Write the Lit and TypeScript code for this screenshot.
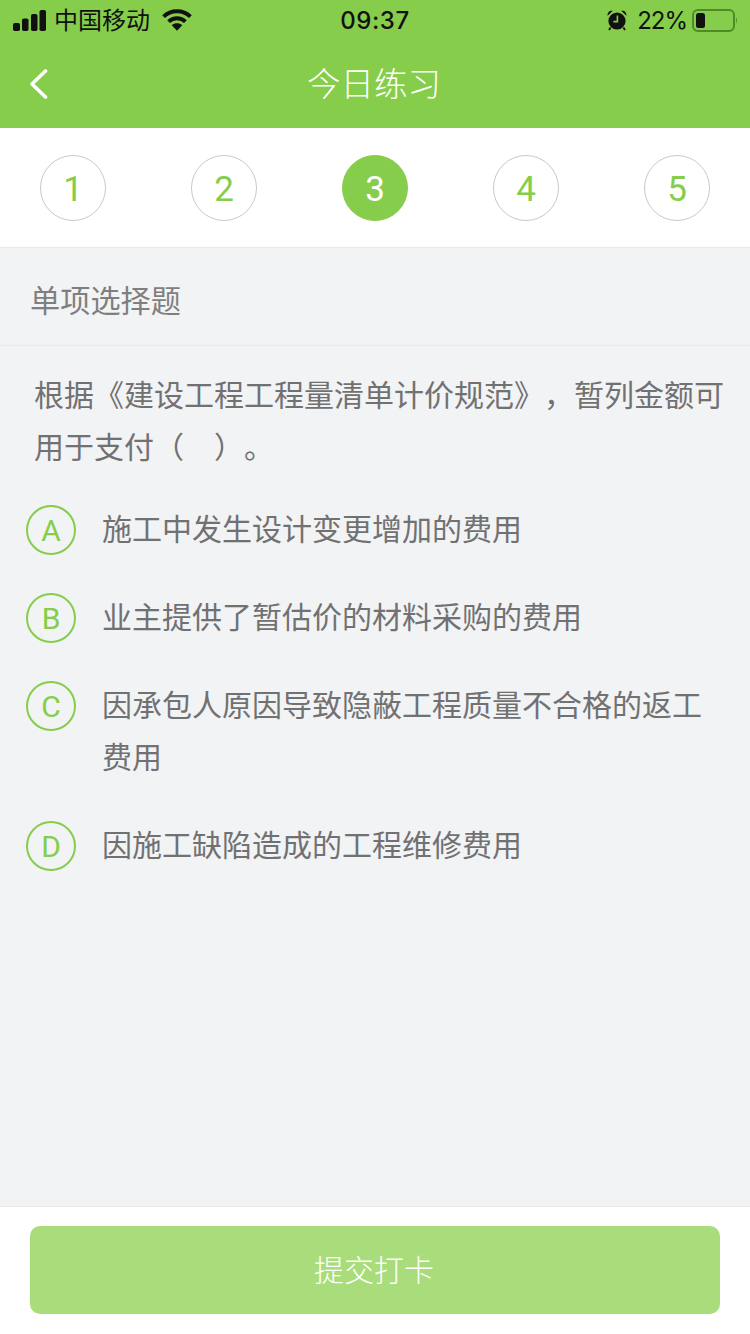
import { LitElement, html, css, svg } from "lit";
import { customElement } from "lit/decorators.js";

const steps = [1, 2, 3, 4, 5];
const options = [
  ["A", "施工中发生设计变更增加的费用"],
  ["B", "业主提供了暂估价的材料采购的费用"],
  ["C", "因承包人原因导致隐蔽工程质量不合格的返工费用"],
  ["D", "因施工缺陷造成的工程维修费用"],
];

@customElement("app-root")
export class AppRoot extends LitElement {
  static styles = css`
    :host {
      display: block;
      width: 750px;
      font-family: "Noto Sans CJK SC", "Noto Sans", sans-serif;
      text-spacing-trim: space-all;
    }
    .page {
      display: flex;
      flex-direction: column;
      height: 1334px;
      background: #f2f3f5;
    }
    .top {
      background: #86cd4b;
      height: 128px;
      display: flex;
      flex-direction: column;
    }
    .status {
      height: 40px;
      display: grid;
      grid-template-columns: 1fr auto 1fr;
      align-items: center;
      color: #111;
      font-size: 24px;
      padding: 0 13px 0 13px;
    }
    .status-left, .status-right {
      display: flex;
      align-items: center;
    }
    .status-right {
      justify-content: flex-end;
    }
    .carrier {
      margin: -2px 12px 0 8px;
      line-height: 40px;
    }
    .time {
      font-family: Inter, "Liberation Sans", sans-serif;
      font-weight: 500;
      font-size: 24px;
      letter-spacing: 0.6px;
    }
    .pct {
      font-family: Inter, "Liberation Sans", sans-serif;
      font-weight: 400;
      font-size: 24px;
      margin: 0 5px 0 10px;
      letter-spacing: -1px;
    }
    svg { display: block; }
    .nav {
      flex: 1;
      display: grid;
      grid-template-columns: 1fr auto 1fr;
      align-items: center;
      padding: 0 30px;
      color: #fff;
    }
    .title {
      font-size: 33.5px;
      font-weight: 300;
      line-height: 88px;
      margin: -5px 2px 0 0;
    }
    .steps {
      height: 120px;
      box-sizing: border-box;
      background: #fff;
      border-bottom: 1px solid #e8e9eb;
      display: flex;
      justify-content: space-between;
      align-items: flex-start;
      padding: 27px 40px 0;
    }
    .step {
      width: 66px;
      height: 66px;
      box-sizing: border-box;
      border-radius: 50%;
      border: 1px solid #c9c9c9;
      color: #86cd4b;
      display: flex;
      align-items: center;
      justify-content: center;
      font-family: Roboto, "Liberation Sans", sans-serif;
      font-weight: 400;
      font-size: 35px;
      padding-top: 2px;
    }
    .step.active {
      background: #86cd4b;
      border-color: #86cd4b;
      color: #fff;
    }
    .kind {
      height: 98px;
      box-sizing: border-box;
      border-bottom: 1px solid #e9eaec;
      padding-left: 30px;
      font-size: 30.2px;
      font-weight: 400;
      line-height: 102px;
      color: #7f7f7f;
    }
    .body {
      flex: 1;
      padding: 21px 25px 0 26px;
      color: #717171;
      font-size: 30px;
      font-weight: 400;
      line-height: 52px;
    }
    .question {
      margin: 0 0 30px 8px;
    }
    .options {
      display: flex;
      flex-direction: column;
      gap: 36px;
    }
    .option {
      display: flex;
      gap: 26px;
    }
    .badge {
      flex: none;
      width: 50px;
      height: 50px;
      margin: 4px 0 -2px;
      box-sizing: border-box;
      border: 2px solid #86cd4b;
      border-radius: 50%;
      color: #86cd4b;
      display: flex;
      align-items: center;
      justify-content: center;
      font-family: Roboto, "Liberation Sans", sans-serif;
      font-size: 30px;
      font-weight: 400;
      line-height: 46px;
      padding-top: 2px;
    }
    .footer {
      height: 128px;
      box-sizing: border-box;
      background: #fff;
      border-top: 1px solid #e8e9eb;
      padding: 19px 30px 0;
    }
    .submit {
      height: 88px;
      box-sizing: border-box;
      padding: 0 2px 5px 0;
      border-radius: 10px;
      background: #a9dc7a;
      color: #fff;
      font-size: 30px;
      font-weight: 300;
      display: flex;
      align-items: center;
      justify-content: center;
    }
  `;

  private signal() {
    return svg`<svg width="33" height="21" viewBox="0 0 33 21" fill="#111">
      <rect x="0" y="13" width="7" height="8" rx="1.8"/>
      <rect x="9" y="8.5" width="6.5" height="12.5" rx="1.8"/>
      <rect x="18" y="4" width="6.5" height="17" rx="1.8"/>
      <rect x="26.5" y="0" width="6.5" height="21" rx="1.8"/>
    </svg>`;
  }

  private wifi() {
    return svg`<svg width="30" height="22" viewBox="0 0 30 22" fill="none" stroke="#111" stroke-width="4">
      <path d="M1.6 7.6C9 .6 21 .6 28.4 7.6"/>
      <path d="M6.6 12.6C11.4 8 18.6 8 23.4 12.6"/>
      <path d="M15 21.8 9.8 16.2C12.6 13.6 17.4 13.6 20.2 16.2Z" fill="#111" stroke="none"/>
    </svg>`;
  }

  private alarm() {
    return svg`<svg width="20" height="21" viewBox="0 0 20 21">
      <circle cx="10" cy="11" r="8.6" fill="#111"/>
      <path d="M.6 5.8C.2 2.4 2.6.2 5.8 .8ZM19.4 5.8C19.8 2.4 17.4.2 14.2 .8Z" fill="#111"/>
      <path d="M3.6 17.6 2 20M16.4 17.6 18 20" stroke="#111" stroke-width="1.8"/>
      <path d="M10.4 5.6V11.6H6.4" fill="none" stroke="#86cd4b" stroke-width="1.6"/>
    </svg>`;
  }

  private battery() {
    return svg`<svg width="45" height="23" viewBox="0 0 45 23">
      <rect x="1" y="1" width="41" height="21" rx="5" fill="none" stroke="#4f8a28" stroke-width="2"/>
      <rect x="4" y="4" width="9" height="15" rx="2.5" fill="#111"/>
      <path d="M44 8.5C45.2 9.2 45.2 13.8 44 14.5Z" fill="#4f8a28"/>
    </svg>`;
  }

  private back() {
    return svg`<svg width="20" height="30" viewBox="0 0 20 30" fill="none" stroke="#fff" stroke-width="3.6" stroke-linecap="round" stroke-linejoin="round">
      <path d="M15.5 2 2 15 15.5 28"/>
    </svg>`;
  }

  render() {
    return html`
      <div class="page">
        <div class="top">
          <div class="status">
            <div class="status-left">
              ${this.signal()}
              <span class="carrier">中国移动</span>
              ${this.wifi()}
            </div>
            <div class="time">09:37</div>
            <div class="status-right">
              ${this.alarm()}
              <span class="pct">22%</span>
              ${this.battery()}
            </div>
          </div>
          <div class="nav">
            <div>${this.back()}</div>
            <div class="title">今日练习</div>
            <div></div>
          </div>
        </div>
        <div class="steps">
          ${steps.map(
            (n) => html`<div class="step ${n === 3 ? "active" : ""}">${n}</div>`
          )}
        </div>
        <div class="kind">单项选择题</div>
        <div class="body">
          <div class="question">根据《建设工程工程量清单计价规范》，暂列金额可用于支付（　）。</div>
          <div class="options">
            ${options.map(
              ([k, t]) => html`<div class="option">
                <div class="badge">${k}</div>
                <div>${t}</div>
              </div>`
            )}
          </div>
        </div>
        <div class="footer"><div class="submit">提交打卡</div></div>
      </div>
    `;
  }
}
